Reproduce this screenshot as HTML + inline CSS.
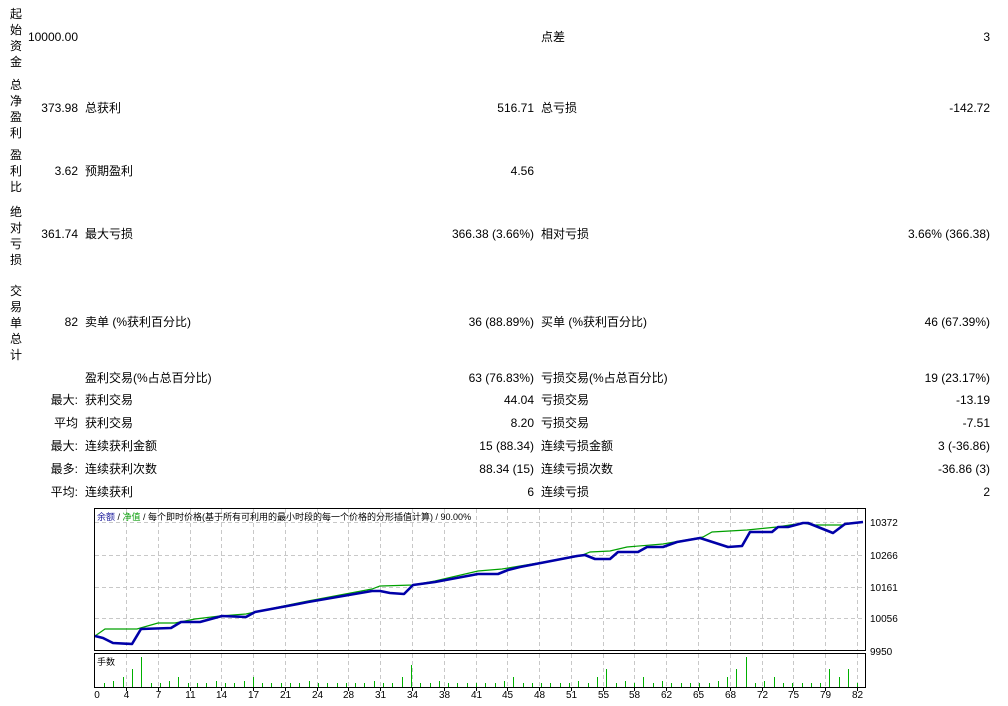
<!DOCTYPE html>
<html><head><meta charset="utf-8">
<style>
html,body{margin:0;padding:0;background:#fff;width:1008px;height:706px;overflow:hidden}
body{font-family:"Liberation Sans","Noto Sans CJK SC",sans-serif;font-size:12px;color:#000;position:relative}
.t{position:absolute;line-height:16px;white-space:nowrap}
.r{text-align:right}
.v{position:absolute;left:9px;width:14px;text-align:center;line-height:16px;font-size:12px}
</style></head><body>
<div class="v" style="top:6px">起<br>始<br>资<br>金</div>
<div class="v" style="top:77px">总<br>净<br>盈<br>利</div>
<div class="v" style="top:147px">盈<br>利<br>比</div>
<div class="v" style="top:204px">绝<br>对<br>亏<br>损</div>
<div class="v" style="top:283px">交<br>易<br>单<br>总<br>计</div>

<div class="t r" style="right:930px;top:29px">10000.00</div>
<div class="t" style="left:541px;top:29px">点差</div>
<div class="t r" style="right:18px;top:29px">3</div>

<div class="t r" style="right:930px;top:100px">373.98</div>
<div class="t" style="left:85px;top:100px">总获利</div>
<div class="t r" style="right:474px;top:100px">516.71</div>
<div class="t" style="left:541px;top:100px">总亏损</div>
<div class="t r" style="right:18px;top:100px">-142.72</div>

<div class="t r" style="right:930px;top:163px">3.62</div>
<div class="t" style="left:85px;top:163px">预期盈利</div>
<div class="t r" style="right:474px;top:163px">4.56</div>

<div class="t r" style="right:930px;top:226px">361.74</div>
<div class="t" style="left:85px;top:226px">最大亏损</div>
<div class="t r" style="right:474px;top:226px">366.38 (3.66%)</div>
<div class="t" style="left:541px;top:226px">相对亏损</div>
<div class="t r" style="right:18px;top:226px">3.66% (366.38)</div>

<div class="t r" style="right:930px;top:314px">82</div>
<div class="t" style="left:85px;top:314px">卖单 (%获利百分比)</div>
<div class="t r" style="right:474px;top:314px">36 (88.89%)</div>
<div class="t" style="left:541px;top:314px">买单 (%获利百分比)</div>
<div class="t r" style="right:18px;top:314px">46 (67.39%)</div>

<div class="t" style="left:85px;top:370px">盈利交易(%占总百分比)</div>
<div class="t r" style="right:474px;top:370px">63 (76.83%)</div>
<div class="t" style="left:541px;top:370px">亏损交易(%占总百分比)</div>
<div class="t r" style="right:18px;top:370px">19 (23.17%)</div>

<div class="t r" style="right:930px;top:392px">最大:</div>
<div class="t" style="left:85px;top:392px">获利交易</div>
<div class="t r" style="right:474px;top:392px">44.04</div>
<div class="t" style="left:541px;top:392px">亏损交易</div>
<div class="t r" style="right:18px;top:392px">-13.19</div>

<div class="t r" style="right:930px;top:415px">平均</div>
<div class="t" style="left:85px;top:415px">获利交易</div>
<div class="t r" style="right:474px;top:415px">8.20</div>
<div class="t" style="left:541px;top:415px">亏损交易</div>
<div class="t r" style="right:18px;top:415px">-7.51</div>

<div class="t r" style="right:930px;top:438px">最大:</div>
<div class="t" style="left:85px;top:438px">连续获利金额</div>
<div class="t r" style="right:474px;top:438px">15 (88.34)</div>
<div class="t" style="left:541px;top:438px">连续亏损金额</div>
<div class="t r" style="right:18px;top:438px">3 (-36.86)</div>

<div class="t r" style="right:930px;top:461px">最多:</div>
<div class="t" style="left:85px;top:461px">连续获利次数</div>
<div class="t r" style="right:474px;top:461px">88.34 (15)</div>
<div class="t" style="left:541px;top:461px">连续亏损次数</div>
<div class="t r" style="right:18px;top:461px">-36.86 (3)</div>

<div class="t r" style="right:930px;top:484px">平均:</div>
<div class="t" style="left:85px;top:484px">连续获利</div>
<div class="t r" style="right:474px;top:484px">6</div>
<div class="t" style="left:541px;top:484px">连续亏损</div>
<div class="t r" style="right:18px;top:484px">2</div>

<svg id="ch" width="1008" height="706" style="position:absolute;left:0;top:0" xmlns="http://www.w3.org/2000/svg">
<g stroke="#c8c8c8" stroke-dasharray="4,3" stroke-width="1" id="grid">
<line x1="95" y1="522.5" x2="865" y2="522.5"/>
<line x1="95" y1="555.5" x2="865" y2="555.5"/>
<line x1="95" y1="587.5" x2="865" y2="587.5"/>
<line x1="95" y1="618.5" x2="865" y2="618.5"/>
</g>
<g id="vg"></g>
<polyline fill="none" stroke="#00a000" stroke-width="1.2" points="95,636 105,629 137,629 158,623 175,623 195,619 220,616 246,614 255,612 298,603 308,601 372,589 380,586 413,585 435,581 478,571 502,569 520,566 580,556 590,552 610,551 627,547 663,544 703,537 712,532 747,530 777,527 803,523 813,525 842,525 863,522"/>
<polyline fill="none" stroke="#0000a8" stroke-width="2.6" stroke-linejoin="round" points="95,636 103,638 113,643 132,644 141,629 171,628 181,622 200,622 222,616 246,617 255,612 298,604 308,602 372,591 380,591 390,593 404,594 413,585 435,582 478,574 498,574 508,570 520,567 577,556 585,555 595,559 610,559 618,552 638,552 647,547 663,547 677,542 700,538 728,547 742,546 750,532 772,532 778,527 788,527 803,523 808,523 833,533 845,524 863,522"/>
<rect x="94.5" y="508.5" width="771" height="142" fill="none" stroke="#000" stroke-width="1"/>
<line x1="94" y1="653.5" x2="866" y2="653.5" stroke="#000"/>
<line x1="94.5" y1="653" x2="94.5" y2="687" stroke="#000"/>
<line x1="865.5" y1="653" x2="865.5" y2="687" stroke="#000"/>
<line x1="94" y1="687.5" x2="866" y2="687.5" stroke="#000"/>
<g id="bars" stroke="#00b000" stroke-width="1"></g>
<g id="ticks" stroke="#000"></g>
<g font-family="Liberation Sans,sans-serif" font-size="10" fill="#000">
<text x="870" y="526">10372</text>
<text x="870" y="559">10266</text>
<text x="870" y="591">10161</text>
<text x="870" y="622">10056</text>
<text x="870" y="655">9950</text>
</g>
<g id="xl" font-family="Liberation Sans,sans-serif" font-size="10" fill="#000" text-anchor="middle"></g>
<text x="97" y="520" font-family="Liberation Sans,Noto Sans CJK SC,sans-serif" font-size="9" fill="#000"><tspan fill="#1c1c9c">余额</tspan> / <tspan fill="#10a010">净值</tspan> / 每个即时价格(基于所有可利用的最小时段的每一个价格的分形插值计算) / 90.00%</text>
<text x="97" y="665" font-family="Liberation Sans,Noto Sans CJK SC,sans-serif" font-size="9" fill="#000">手数</text>
</svg>
<script>
var ns="http://www.w3.org/2000/svg";
function el(p,n,a){var e=document.createElementNS(ns,n);for(var k in a)e.setAttribute(k,a[k]);document.getElementById(p).appendChild(e);return e;}
var labels=[0,4,7,11,14,17,21,24,28,31,34,38,41,45,48,51,55,58,62,65,68,72,75,79,82];
for(var k=0;k<labels.length;k++){
 var x=Math.round(94.2+k*31.78)+0.5;
 if(k>0){el("vg","line",{x1:x,y1:509,x2:x,y2:651,stroke:"#c8c8c8","stroke-dasharray":"4,3"});
 el("vg","line",{x1:x,y1:654,x2:x,y2:687,stroke:"#c8c8c8","stroke-dasharray":"4,3"});
 el("ticks","line",{x1:x,y1:687,x2:x,y2:691});}
 var t=el("xl","text",{x:k==0?97:x,y:698});t.textContent=labels[k];
}
var h={1:4,2:6,3:10,4:18,5:30,8:6,9:10,13:6,16:6,17:10,23:6,26:4,30:6,33:10,34:22,37:6,40:4,44:6,45:10,47:4,52:6,54:10,55:18,57:6,59:10,61:6,64:4,67:6,68:10,69:18,70:30,72:6,73:10,79:18,80:10,81:18,82:4};
for(var i=1;i<=82;i++){var hh=h[i]||4;var x=Math.round(94.7+9.3*i)+0.5;el("bars","line",{x1:x,y1:687,x2:x,y2:687-hh});}
</script>
</body></html>
